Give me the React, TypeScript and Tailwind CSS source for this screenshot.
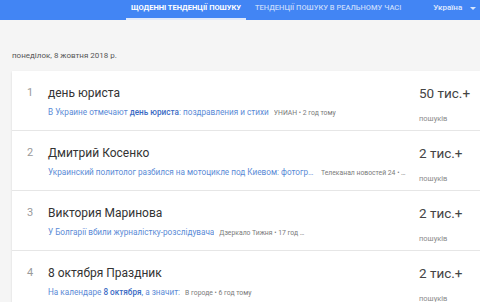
import React from 'react';

type Trend = {
  rank: number;
  title: string;
  pre: string;
  bold?: string;
  post?: string;
  source: string;
  count: string;
};

const trends: Trend[] = [
  {
    rank: 1,
    title: 'день юриста',
    pre: 'В Украине отмечают ',
    bold: 'день юриста',
    post: ': поздравления и стихи',
    source: 'УНИАН • 2 год тому',
    count: '50 тис.+',
  },
  {
    rank: 2,
    title: 'Дмитрий Косенко',
    pre: 'Украинский политолог разбился на мотоцикле под Киевом: фотографии с места аварии',
    source: 'Телеканал новостей 24 • 4 год тому',
    count: '2 тис.+',
  },
  {
    rank: 3,
    title: 'Виктория Маринова',
    pre: 'У Болгарії вбили журналістку-розслідувача',
    source: 'Дзеркало Тижня • 17 год тому',
    count: '2 тис.+',
  },
  {
    rank: 4,
    title: '8 октября Праздник',
    pre: 'На календаре ',
    bold: '8 октября',
    post: ', а значит:',
    source: 'В городе • 6 год тому',
    count: '2 тис.+',
  },
];

const TrendRow: React.FC<{ t: Trend }> = ({ t }) => (
  <div className="flex h-[60px] border-b border-[#e6e6e6]">
    <div className="w-[36px] shrink-0 pt-[14px] text-center text-[11px] leading-[16px] text-[#9a9a9a]">
      {t.rank}
    </div>
    <div className="w-[371px] shrink-0 min-w-0 pt-[14px] pr-2">
      <div className="text-[12px] leading-[16px] text-[#333]">{t.title}</div>
      <div className="mt-[6px] flex items-baseline gap-[5px] text-[8.2px] leading-[10px]">
        <span className="truncate max-w-[268px] text-[#5a8ad6]">
          {t.pre}
          {t.bold && <span className="font-medium text-[#3b6bc4]">{t.bold}</span>}
          {t.post}
        </span>
        <span className="truncate max-w-[88px] text-[6.8px] text-[#7a7a7a]">{t.source}</span>
      </div>
    </div>
    <div className="flex-1 pt-[13px]">
      <div className="text-[13.5px] leading-[18px] text-[#444]">{t.count}</div>
      <div className="mt-[12px] text-[7.5px] leading-[10px] text-[#8a8a8a]">пошуків</div>
    </div>
  </div>
);

const App: React.FC = () => {
  return (
    <div
      className="h-[302px] w-[480px] overflow-hidden bg-[#f5f5f5]"
      style={{ fontFamily: 'Roboto, "Noto Sans", sans-serif' }}
    >
      {/* Header */}
      <div className="flex h-[20px] bg-[#4285f4] pl-[126px]">
        <div className="flex w-[120px] flex-col items-center">
          <div className="flex-1 pt-[3px] text-[7.5px] font-bold leading-[10px] text-white">
            ЩОДЕННІ ТЕНДЕНЦІЇ ПОШУКУ
          </div>
          <div className="h-[2px] w-full bg-[#dfe9fb]" />
        </div>
        <div className="ml-[9px] pt-[3px] text-[7.5px] font-medium leading-[10px] text-white/70">
          ТЕНДЕНЦІЇ ПОШУКУ В РЕАЛЬНОМУ ЧАСІ
        </div>
        <div className="ml-[32px] flex items-start gap-[8px] pt-[3px]">
          <span className="text-[8px] font-medium leading-[10px] text-white/85">Україна</span>
          <span className="mt-[4px] h-0 w-0 border-x-[3px] border-t-[3px] border-x-transparent border-t-white/80" />
        </div>
      </div>

      {/* Date */}
      <div className="pl-3 pt-[31px] text-[8px] leading-[10px] text-[#555]">
        понеділок, 8 жовтня 2018 р.
      </div>

      {/* Card */}
      <div className="ml-3 mt-[10px] bg-white shadow-[0_1px_2px_rgba(0,0,0,0.12)]">
        {trends.map((t) => (
          <TrendRow key={t.rank} t={t} />
        ))}
      </div>
    </div>
  );
};

export default App;
